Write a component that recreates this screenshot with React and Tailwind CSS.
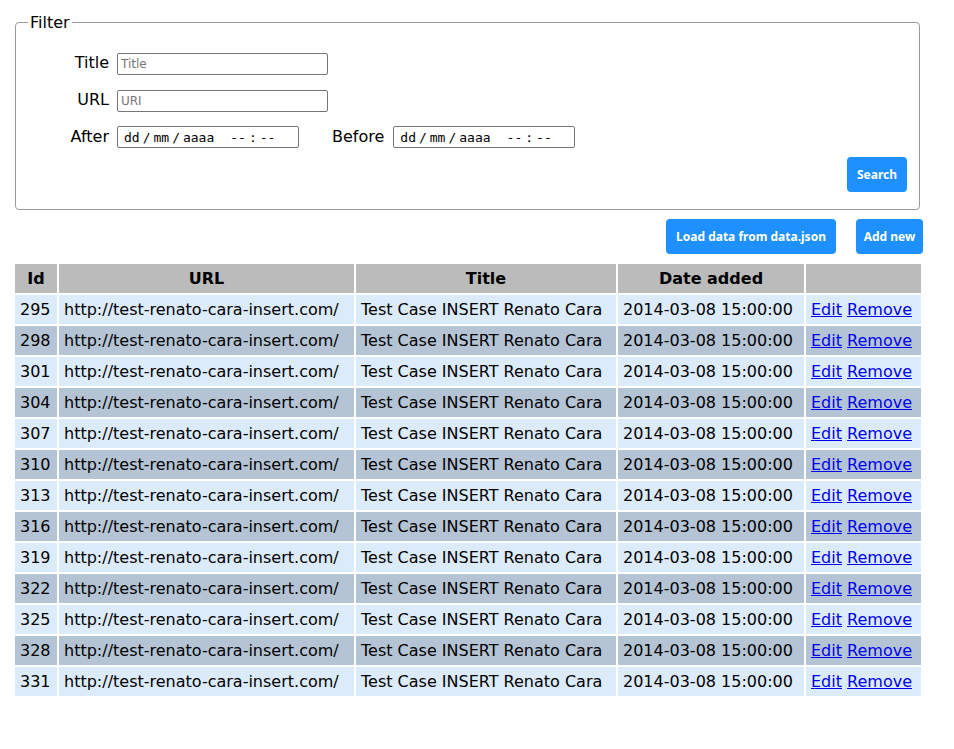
import React from "react";

const ids = [295, 298, 301, 304, 307, 310, 313, 316, 319, 322, 325, 328, 331];

function DateBox() {
  return (
    <div className="flex h-[22px] w-[182px] items-center rounded-[2px] border border-[#767676] bg-white pl-[6px] font-['DejaVu_Sans_Mono',monospace] text-[13px] leading-none text-black">
      <span>dd</span>
      <span className="mx-[3px]">/</span>
      <span>mm</span>
      <span className="mx-[3px]">/</span>
      <span>aaaa</span>
      <span className="ml-[16px]">--</span>
      <span className="mx-[3px]">:</span>
      <span>--</span>
    </div>
  );
}

function TextBox({ placeholder }) {
  return (
    <input
      placeholder={placeholder}
      className="h-[22px] w-[211px] rounded-[2px] border border-[#767676] bg-white px-[3px] font-['DejaVu_Sans',sans-serif] text-[12px] text-black outline-none placeholder:text-[#757575]"
    />
  );
}

export default function App() {
  return (
    <div className="min-h-[749px] bg-white px-[13px] pt-[10px] font-['DejaVu_Sans',sans-serif] text-[16px] leading-[24px] text-black">
      <div className="w-[910px]">
        <fieldset className="mx-[2px] mr-[3px] rounded-[4px] border border-[#9a9a9a] px-3 pb-[17px] pt-0">
          <legend className="px-[2px] pt-[1px]">Filter</legend>
          <div className="mt-[17px] flex flex-col gap-[15px]">
            <div className="flex h-[22px] items-center">
              <label className="w-[81px] text-right">Title</label>
              <div className="ml-[8px]">
                <TextBox placeholder="Title" />
              </div>
            </div>
            <div className="flex h-[22px] items-center">
              <label className="w-[81px] text-right">URL</label>
              <div className="ml-[8px]">
                <TextBox placeholder="URI" />
              </div>
            </div>
            <div className="flex h-[22px] items-center">
              <label className="w-[81px] text-right">After</label>
              <div className="ml-[8px]">
                <DateBox />
              </div>
              <label className="ml-[33px]">Before</label>
              <div className="ml-[9px]">
                <DateBox />
              </div>
            </div>
          </div>
          <div className="mt-[9px] flex justify-end">
            <button className="h-[35px] w-[60px] rounded-[4px] bg-[#1e90ff] font-['Noto_Sans',sans-serif] text-[12px] font-bold text-white">
              Search
            </button>
          </div>
        </fieldset>

        <div className="mt-[9px] flex justify-end gap-[20px]">
          <button className="h-[35px] w-[170px] rounded-[4px] bg-[#1e90ff] font-['Noto_Sans',sans-serif] text-[12px] font-bold text-white">
            Load data from data.json
          </button>
          <button className="h-[35px] w-[67px] rounded-[4px] bg-[#1e90ff] font-['Noto_Sans',sans-serif] text-[12px] font-bold text-white">
            Add new
          </button>
        </div>

        <table className="mt-[8px] w-[910px] table-fixed border-separate border-spacing-[2px] leading-[19px]">
          <colgroup>
            <col className="w-[42px]" />
            <col className="w-[295px]" />
            <col className="w-[260px]" />
            <col className="w-[186px]" />
            <col />
          </colgroup>
          <thead>
            <tr className="bg-[#bbbbbb]">
              <th className="h-[29px] px-[5px] text-center font-bold">Id</th>
              <th className="h-[29px] px-[5px] text-center font-bold">URL</th>
              <th className="h-[29px] px-[5px] text-center font-bold">Title</th>
              <th className="h-[29px] px-[5px] text-center font-bold">Date added</th>
              <th className="h-[29px] px-[5px]"></th>
            </tr>
          </thead>
          <tbody>
            {ids.map((id, i) => (
              <tr key={id} className={i % 2 === 0 ? "bg-[#dcebfa]" : "bg-[#b4c4d4]"}>
                <td className="h-[29px] whitespace-nowrap px-[5px]">{id}</td>
                <td className="h-[29px] whitespace-nowrap px-[5px]">http://test-renato-cara-insert.com/</td>
                <td className="h-[29px] whitespace-nowrap px-[5px]">Test Case INSERT Renato Cara</td>
                <td className="h-[29px] whitespace-nowrap px-[5px]">2014-03-08 15:00:00</td>
                <td className="h-[29px] whitespace-nowrap px-[5px]">
                  <a href="#" className="text-[#0000ee] underline">Edit</a>{" "}
                  <a href="#" className="text-[#0000ee] underline">Remove</a>
                </td>
              </tr>
            ))}
          </tbody>
        </table>
      </div>
    </div>
  );
}
